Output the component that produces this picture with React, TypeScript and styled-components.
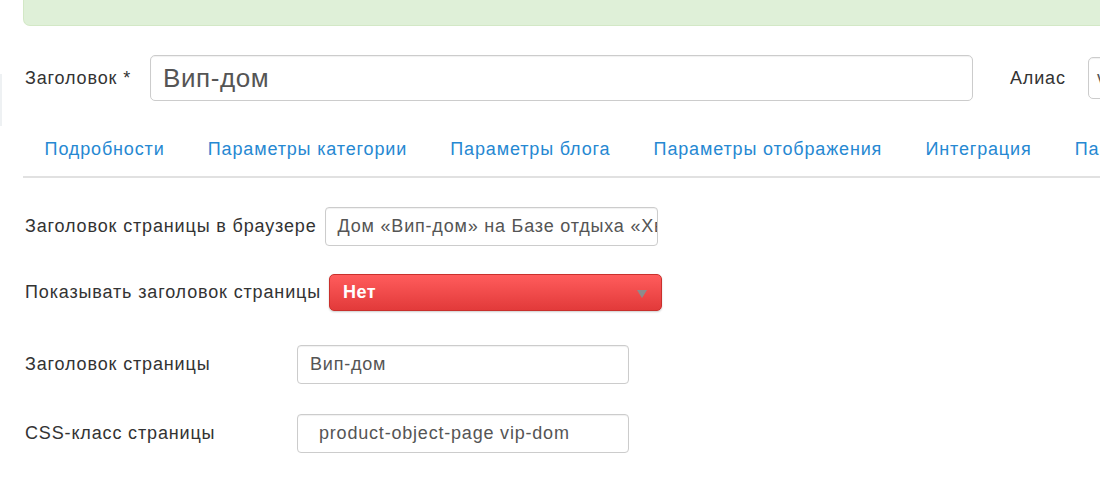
import React from 'react';
import styled, { createGlobalStyle } from 'styled-components';

const GlobalStyle = createGlobalStyle`
  html, body {
    margin: 0;
    padding: 0;
    background: #fff;
  }
  body {
    font-family: "Liberation Sans", Arial, sans-serif;
    color: #333;
    overflow: hidden;
  }
`;

const Page = styled.div`
  width: 1100px;
  height: 500px;
  padding-left: 23px;
  box-sizing: border-box;
  overflow: hidden;
  position: relative;
`;

const EdgeLine = styled.div`
  position: absolute;
  left: 0;
  top: 74px;
  width: 2px;
  height: 52px;
  background: #eef1f3;
`;

const Alert = styled.div`
  height: 26px;
  width: calc(100% + 30px);
  box-sizing: border-box;
  background: #dff0d8;
  border: 1px solid #d3e8c6;
  border-top: none;
  border-radius: 0 0 7px 7px;
`;

const TitleRow = styled.div`
  display: flex;
  align-items: center;
  margin-top: 29px;
  height: 46px;
  white-space: nowrap;
`;

const TitleLabel = styled.label`
  font-size: 18px;
  letter-spacing: 0.85px;
  padding-left: 2px;
  width: 125px;
  flex-shrink: 0;
  color: #333;
`;

const TitleInput = styled.div<{ $width: number }>`
  width: ${(p) => p.$width}px;
  height: 46px;
  box-sizing: border-box;
  border: 1px solid #ccc;
  border-radius: 5px;
  box-shadow: inset 0 1px 1px rgba(0, 0, 0, 0.06);
  display: flex;
  align-items: center;
  padding-left: 12px;
  font-size: 26px;
  letter-spacing: 0.6px;
  color: #555;
  flex-shrink: 0;
  overflow: hidden;
`;

const AliasLabel = styled.label`
  font-size: 18px;
  letter-spacing: 0.85px;
  color: #333;
  margin-left: 37px;
  width: 78px;
  flex-shrink: 0;
`;

const AliasInput = styled(TitleInput)`
  height: 42px;
  font-size: 18px;
  padding-left: 8px;
`;

const Tabs = styled.ul`
  list-style: none;
  margin: 22px 0 0 0;
  padding: 0;
  display: flex;
  border-bottom: 2px solid #e1e1e1;
  width: calc(100% + 30px);
  white-space: nowrap;
`;

const Tab = styled.li`
  height: 53px;
  display: flex;
  align-items: center;
  padding: 0 21.6px;
  font-size: 18px;
  letter-spacing: 0.85px;
  color: #2688d2;
  flex-shrink: 0;
`;

const Form = styled.div`
  display: flex;
  flex-direction: column;
`;

const Row = styled.div<{ $height: number; $top: number }>`
  display: flex;
  align-items: center;
  height: ${(p) => p.$height}px;
  margin-top: ${(p) => p.$top}px;
  white-space: nowrap;
`;

const Label = styled.label`
  font-size: 18px;
  letter-spacing: 0.85px;
  color: #333;
  padding-left: 2px;
  min-width: 264px;
  margin-right: 8px;
`;

const TextInput = styled.div<{ $indent?: number; $width?: number }>`
  width: ${(p) => p.$width ?? 333}px;
  height: 39px;
  box-sizing: border-box;
  border: 1px solid #ccc;
  border-radius: 4px;
  box-shadow: inset 0 1px 1px rgba(0, 0, 0, 0.06);
  display: flex;
  align-items: center;
  padding-left: ${(p) => p.$indent ?? 12}px;
  font-size: 18px;
  letter-spacing: 0.8px;
  color: #555;
  overflow: hidden;
  flex-shrink: 0;
`;

const Select = styled.div`
  width: 333px;
  height: 37px;
  box-sizing: border-box;
  border: 1px solid #c9302c;
  border-radius: 5px;
  background: linear-gradient(#ff5c5c, #e23a3a);
  box-shadow: 0 1px 2px rgba(0, 0, 0, 0.2);
  display: flex;
  align-items: center;
  justify-content: space-between;
  padding: 0 14px 0 13px;
  font-size: 18px;
  font-weight: bold;
  letter-spacing: 0.5px;
  color: #fff;
  flex-shrink: 0;
`;

const Caret = styled.span`
  width: 0;
  height: 0;
  border-left: 5px solid transparent;
  border-right: 5px solid transparent;
  border-top: 8px solid #8c8c8c;
  margin-top: 2px;
`;

const tabs = [
  'Подробности',
  'Параметры категории',
  'Параметры блога',
  'Параметры отображения',
  'Интеграция',
  'Параметры публикации',
];

export default function App() {
  return (
    <Page>
      <GlobalStyle />
      <EdgeLine />
      <Alert />
      <TitleRow>
        <TitleLabel>Заголовок *</TitleLabel>
        <TitleInput $width={823}>Вип-дом</TitleInput>
        <AliasLabel>Алиас</AliasLabel>
        <AliasInput $width={200}>vip-dom</AliasInput>
      </TitleRow>
      <Tabs>
        {tabs.map((t) => (
          <Tab key={t}>{t}</Tab>
        ))}
      </Tabs>
      <Form>
        <Row $height={39} $top={29}>
          <Label>Заголовок страницы в браузере</Label>
          <TextInput>Дом «Вип-дом» на Базе отдыха «Хвойный бор»</TextInput>
        </Row>
        <Row $height={37} $top={28}>
          <Label>Показывать заголовок страницы</Label>
          <Select>
            <span>Нет</span>
            <Caret />
          </Select>
        </Row>
        <Row $height={39} $top={34}>
          <Label>Заголовок страницы</Label>
          <TextInput $width={332}>Вип-дом</TextInput>
        </Row>
        <Row $height={39} $top={30}>
          <Label>CSS-класс страницы</Label>
          <TextInput $width={332} $indent={21}>
            product-object-page vip-dom
          </TextInput>
        </Row>
      </Form>
    </Page>
  );
}
